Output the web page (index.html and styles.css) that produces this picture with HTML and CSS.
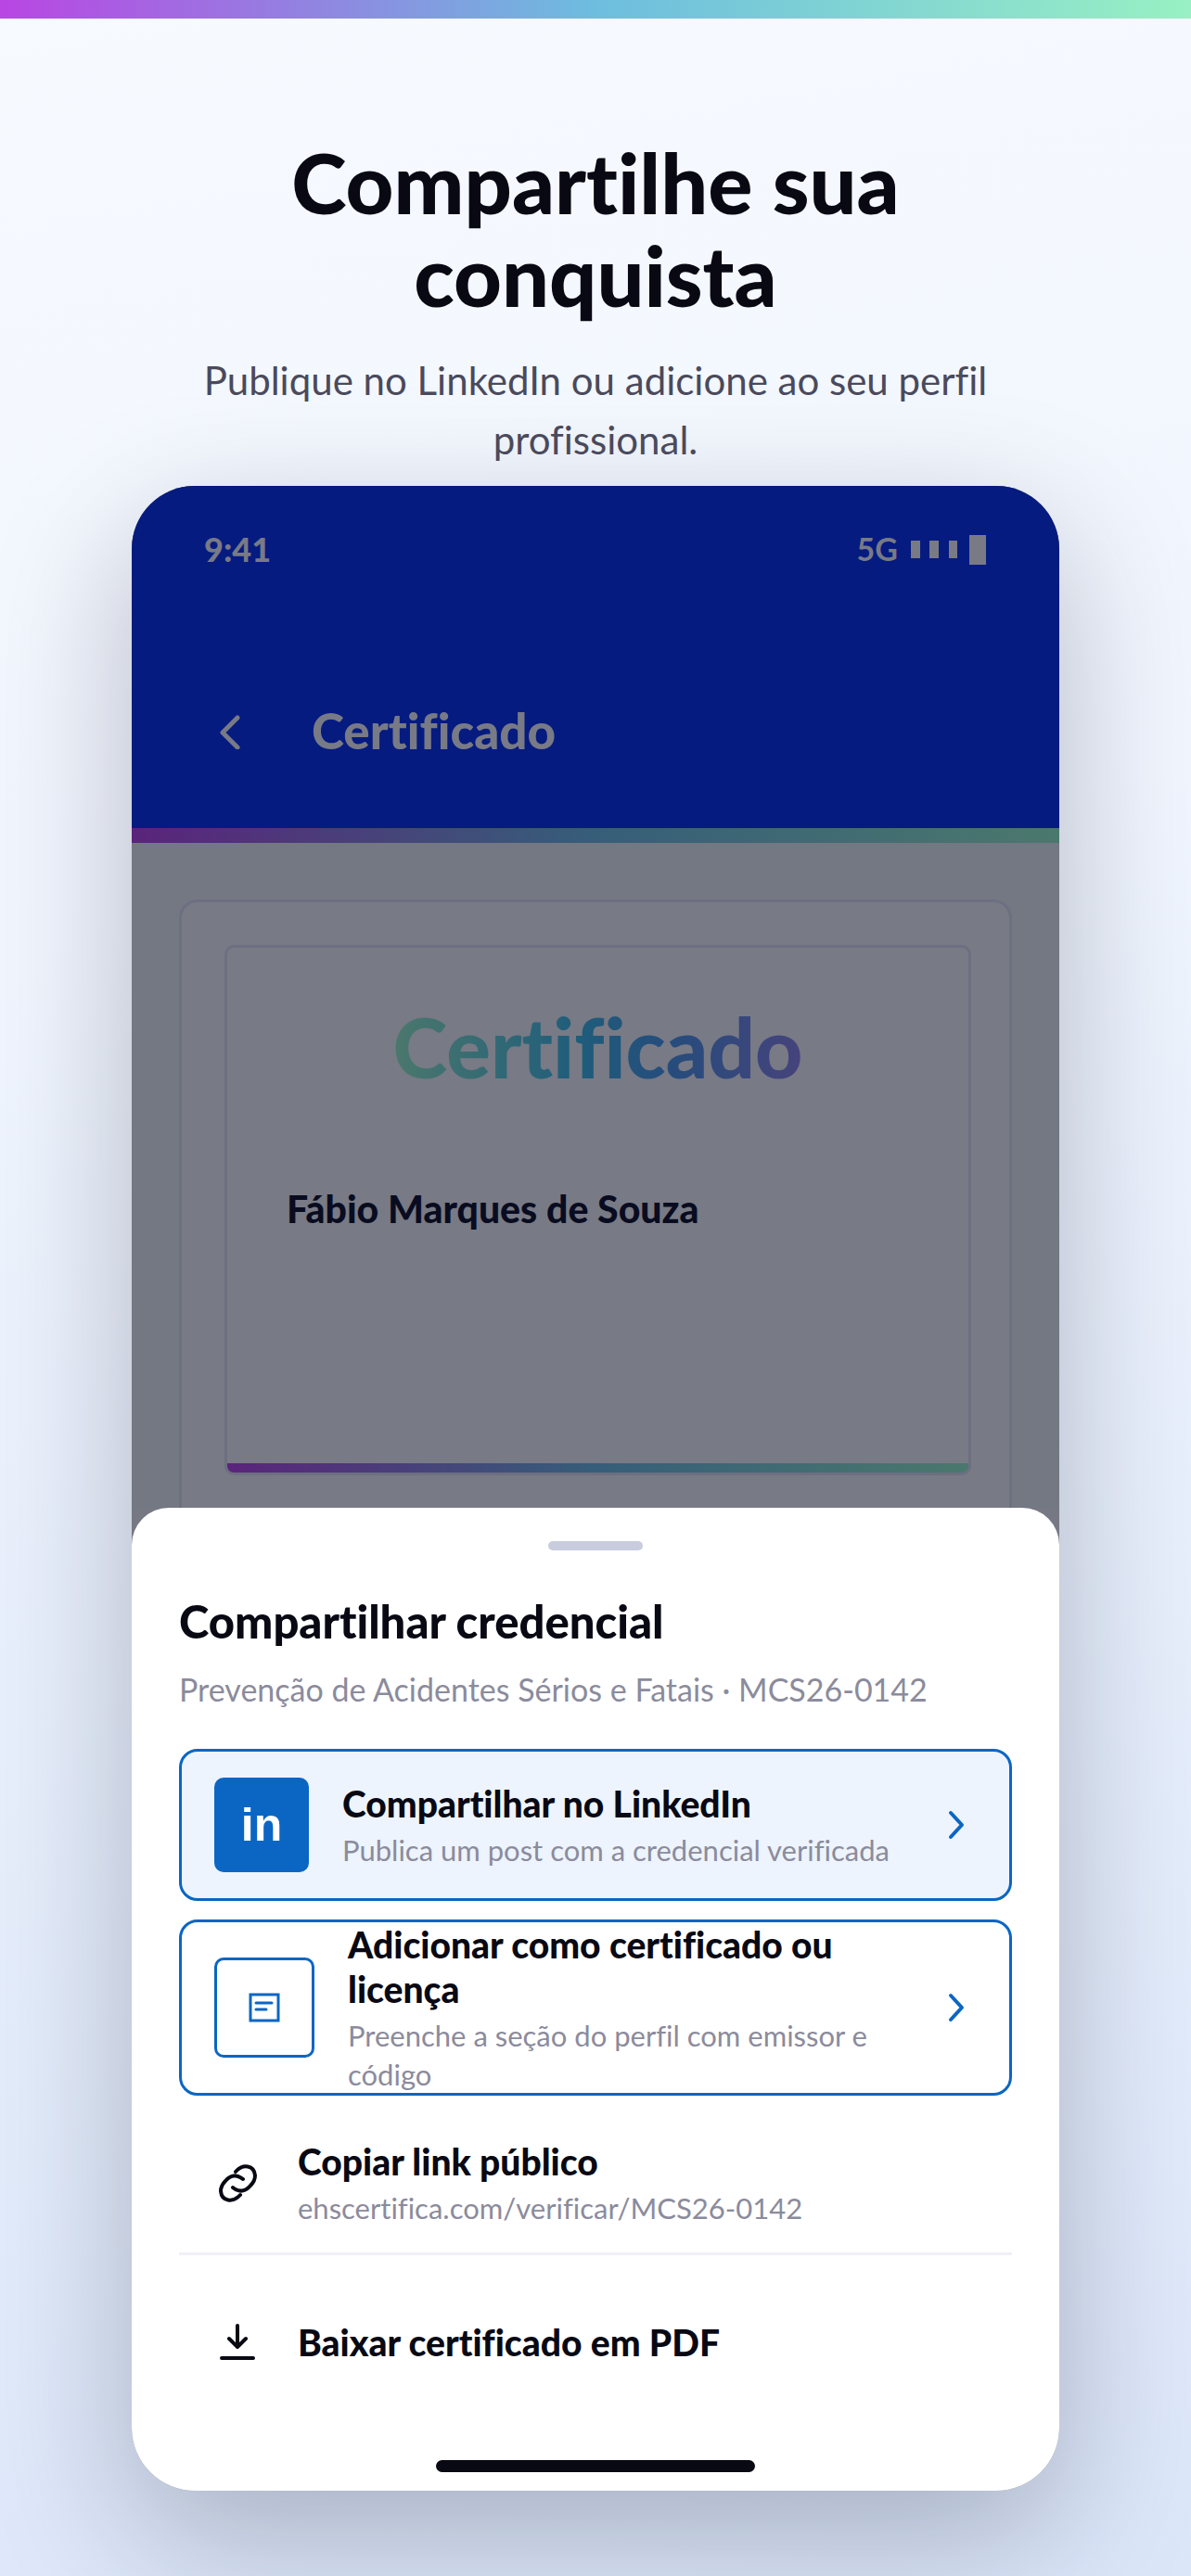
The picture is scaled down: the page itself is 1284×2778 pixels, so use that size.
FILE: index.html
```html
<!DOCTYPE html>
<html lang="pt-BR">
<head>
  <meta charset="UTF-8" />
  <meta name="viewport" content="width=device-width, initial-scale=1.0" />
  <title>Compartilhe sua conquista</title>
  <link rel="stylesheet" href="styles.css">
</head>
<body>
  <div class="stripe page-stripe"></div>

  <header class="intro">
    <h1>Compartilhe sua<br>conquista</h1>
    <p>Publique no LinkedIn ou adicione ao seu perfil profissional.</p>
  </header>

  <main class="phone">
    <div class="screen">
      <div class="top">
        <div class="status">
          <span class="time">9:41</span>
          <span class="signal">
            5G
            <svg width="82" height="34" viewBox="0 0 82 34" fill="currentColor" aria-hidden="true">
              <rect x="0" y="8" width="10" height="19" />
              <rect x="20" y="8" width="10" height="19" />
              <rect x="41" y="8" width="9" height="19" />
              <rect x="63" y="2" width="18" height="32" />
            </svg>
          </span>
        </div>
        <div class="nav">
          <button class="back" type="button" aria-label="Voltar">
            <svg width="24" height="40" viewBox="0 0 24 40" aria-hidden="true"><path d="M20 6 4 22l16 16" /></svg>
          </button>
          <h2>Certificado</h2>
        </div>
      </div>
      <div class="stripe top-stripe"></div>

      <div class="content">
        <div class="card">
          <div class="certificate">
            <p class="cert-title"><span>Certificado</span></p>
            <p class="cert-name">Fábio Marques de Souza</p>
            <div class="stripe cert-stripe"></div>
          </div>
        </div>
      </div>
    </div>

    <section class="sheet">
      <div class="handle"></div>
      <h2 class="sheet-title">Compartilhar credencial</h2>
      <p class="sheet-sub">Prevenção de Acidentes Sérios e Fatais · MCS26-0142</p>

      <button class="option primary" type="button">
        <span class="tile linkedin">in</span>
        <span class="text">
          <strong>Compartilhar no LinkedIn</strong>
          <small>Publica um post com a credencial verificada</small>
        </span>
        <svg class="chevron" width="20" height="34" viewBox="0 0 20 34" aria-hidden="true"><path d="M3 4l12 13L3 30" /></svg>
      </button>

      <button class="option tall" type="button">
        <span class="tile outline">
          <svg width="34" height="32" viewBox="0 0 34 32" aria-hidden="true">
            <rect x="2" y="2" width="30" height="28" />
            <path d="M8 11h17M8 18h11" stroke-linecap="round" />
          </svg>
        </span>
        <span class="text">
          <strong>Adicionar como certificado ou<br>licença</strong>
          <small>Preenche a seção do perfil com emissor e<br>código</small>
        </span>
        <svg class="chevron" width="20" height="34" viewBox="0 0 20 34" aria-hidden="true"><path d="M3 4l12 13L3 30" /></svg>
      </button>

      <button class="row link" type="button">
        <svg width="50" height="50" viewBox="0 0 50 50" aria-hidden="true">
          <path d="M23 12C31 3 43 5 44 16c0 5-2 8-5 11-5 6-12 8-19 2" />
          <path d="M23 12C31 3 43 5 44 16c0 5-2 8-5 11-5 6-12 8-19 2" transform="rotate(180 25.5 24.5)" />
        </svg>
        <span class="text">
          <strong>Copiar link público</strong>
          <small>ehscertifica.com/verificar/MCS26-0142</small>
        </span>
      </button>

      <button class="row" type="button">
        <svg width="50" height="50" viewBox="0 0 50 50" aria-hidden="true">
          <path d="M25 7v23M16 21l9 9 9-9M8 42h34" />
        </svg>
        <span class="text"><strong>Baixar certificado em PDF</strong></span>
      </button>

      <div class="home"></div>
    </section>
  </main>
</body>
</html>
```

FILE: styles.css
```css
* {
  box-sizing: border-box;
}

body {
  margin: 0;
  min-height: 100vh;
  font-family: Lato, "Liberation Sans", sans-serif;
  font-variant-ligatures: none;
  color: #090914;
  background: linear-gradient(170deg, #f7faff 0%, #f0f5fe 35%, #dbe6f9 100%);
}

h1, h2, p {
  margin: 0;
}

button {
  font: inherit;
  font-variant-ligatures: none;
  color: inherit;
  text-align: left;
  background: none;
  border: 0;
  padding: 0;
}

svg {
  flex: none;
}

.stripe {
  background: linear-gradient(90deg, #b946e3 0%, #6dbddf 50%, #98f0c3 100%);
}

.page-stripe {
  height: 20px;
}

.intro {
  padding: 126px 160px 0;
  text-align: center;
}

.intro h1 {
  font-size: 90px;
  line-height: 100px;
  font-weight: 900;
}

.intro p {
  margin-top: 32px;
  font-size: 42px;
  line-height: 64px;
  color: #4a4a5c;
}

.phone {
  max-width: 1000px;
  margin: 18px auto 0;
  border-radius: 68px;
  overflow: hidden;
  background: #767884;
  box-shadow: 0 50px 150px rgba(10, 15, 35, 0.26);
}

.screen {
  height: 1102px;
  overflow: hidden;
  background: #747883;
}

.top {
  height: 369px;
  padding: 42px 78px 0;
  background: #051b80;
  color: #787a86;
}

.status {
  display: flex;
  align-items: center;
  justify-content: space-between;
  line-height: 52px;
}

.time {
  font-size: 36px;
  font-weight: 900;
}

.signal {
  display: flex;
  align-items: center;
  gap: 14px;
  font-size: 34px;
  font-weight: 700;
}

.nav {
  display: flex;
  align-items: center;
  gap: 76px;
  margin-top: 138px;
  padding-left: 16px;
}

.nav h2 {
  font-size: 53px;
  line-height: 64px;
  font-weight: 900;
}

.back {
  display: flex;
}

.back svg,
.chevron {
  fill: none;
  stroke: currentColor;
  stroke-width: 5;
  stroke-linecap: round;
  stroke-linejoin: round;
}

.top-stripe,
.cert-stripe {
  background: linear-gradient(90deg, #5a247b 0%, #365e79 50%, #4b786d 100%);
}

.top-stripe {
  height: 16px;
}

.content {
  padding: 61px 51px 0;
}

.card {
  height: 700px;
  padding: 46px 41px 0 46px;
  border: 3px solid #6d6f82;
  border-radius: 20px;
  background: #787a85;
}

.certificate {
  height: 572px;
  display: flex;
  flex-direction: column;
  border: 3px solid #6d6f82;
  border-radius: 10px;
  overflow: hidden;
}

.cert-title {
  margin-top: 54px;
  font-size: 89px;
  line-height: 106px;
  font-weight: 900;
  text-align: center;
}

.cert-title span {
  background: linear-gradient(90deg, #4b786d 0%, #1f5d7b 45%, #264c7c 68%, #46437c 100%);
  background-clip: text;
  color: transparent;
}

.cert-name {
  margin-top: 96px;
  padding-left: 64px;
  font-size: 41px;
  line-height: 52px;
  font-weight: 900;
  color: #090c20;
}

.cert-stripe {
  height: 10px;
  margin-top: auto;
}

.sheet {
  padding: 36px 51px 20px;
  border-radius: 40px 40px 0 0;
  background: #fff;
}

.handle {
  width: 102px;
  height: 10px;
  margin: 0 auto;
  border-radius: 5px;
  background: #c9ccde;
}

.sheet-title {
  margin-top: 46px;
  font-size: 49px;
  line-height: 60px;
  font-weight: 900;
}

.sheet-sub {
  margin-top: 18px;
  font-size: 34px;
  line-height: 52px;
  color: #8b8b9c;
}

.option {
  display: flex;
  align-items: center;
  width: 100%;
  height: 164px;
  margin-top: 38px;
  padding: 0 46px 0 35px;
  border: 3px solid #0b66c3;
  border-radius: 20px;
}

.option.primary {
  background: #edf4fd;
}

.option.tall {
  height: 190px;
  margin-top: 20px;
}

.tile {
  display: flex;
  flex: none;
  align-items: center;
  justify-content: center;
  width: 102px;
  height: 102px;
  margin-right: 36px;
  border-radius: 10px;
}

.linkedin {
  background: #0b66c3;
  color: #fff;
  font-family: "Liberation Sans", sans-serif;
  font-size: 50px;
  font-weight: 700;
}

.outline {
  width: 108px;
  height: 108px;
  border: 3px solid #0b66c3;
}

.outline svg {
  fill: none;
  stroke: #0b66c3;
  stroke-width: 3;
}

.text {
  display: flex;
  flex: 1;
  flex-direction: column;
}

.text strong {
  font-size: 39px;
  line-height: 48px;
  font-weight: 900;
}

.text small {
  margin-top: 5px;
  font-size: 31px;
  line-height: 42px;
  color: #8b8b9c;
  white-space: nowrap;
}

.chevron {
  color: #0b66c3;
  stroke-width: 4;
}

.row {
  display: flex;
  align-items: center;
  gap: 40px;
  width: 100%;
  height: 188px;
  padding-left: 38px;
}

.row svg {
  fill: none;
  stroke: currentColor;
  stroke-width: 4;
  stroke-linecap: round;
  stroke-linejoin: round;
}

.row.link {
  height: 172px;
  padding-top: 20px;
  border-bottom: 3px solid #f0f0f7;
}

.home {
  width: 344px;
  height: 13px;
  margin: 33px auto 0;
  border-radius: 7px;
  background: #090914;
}
```
